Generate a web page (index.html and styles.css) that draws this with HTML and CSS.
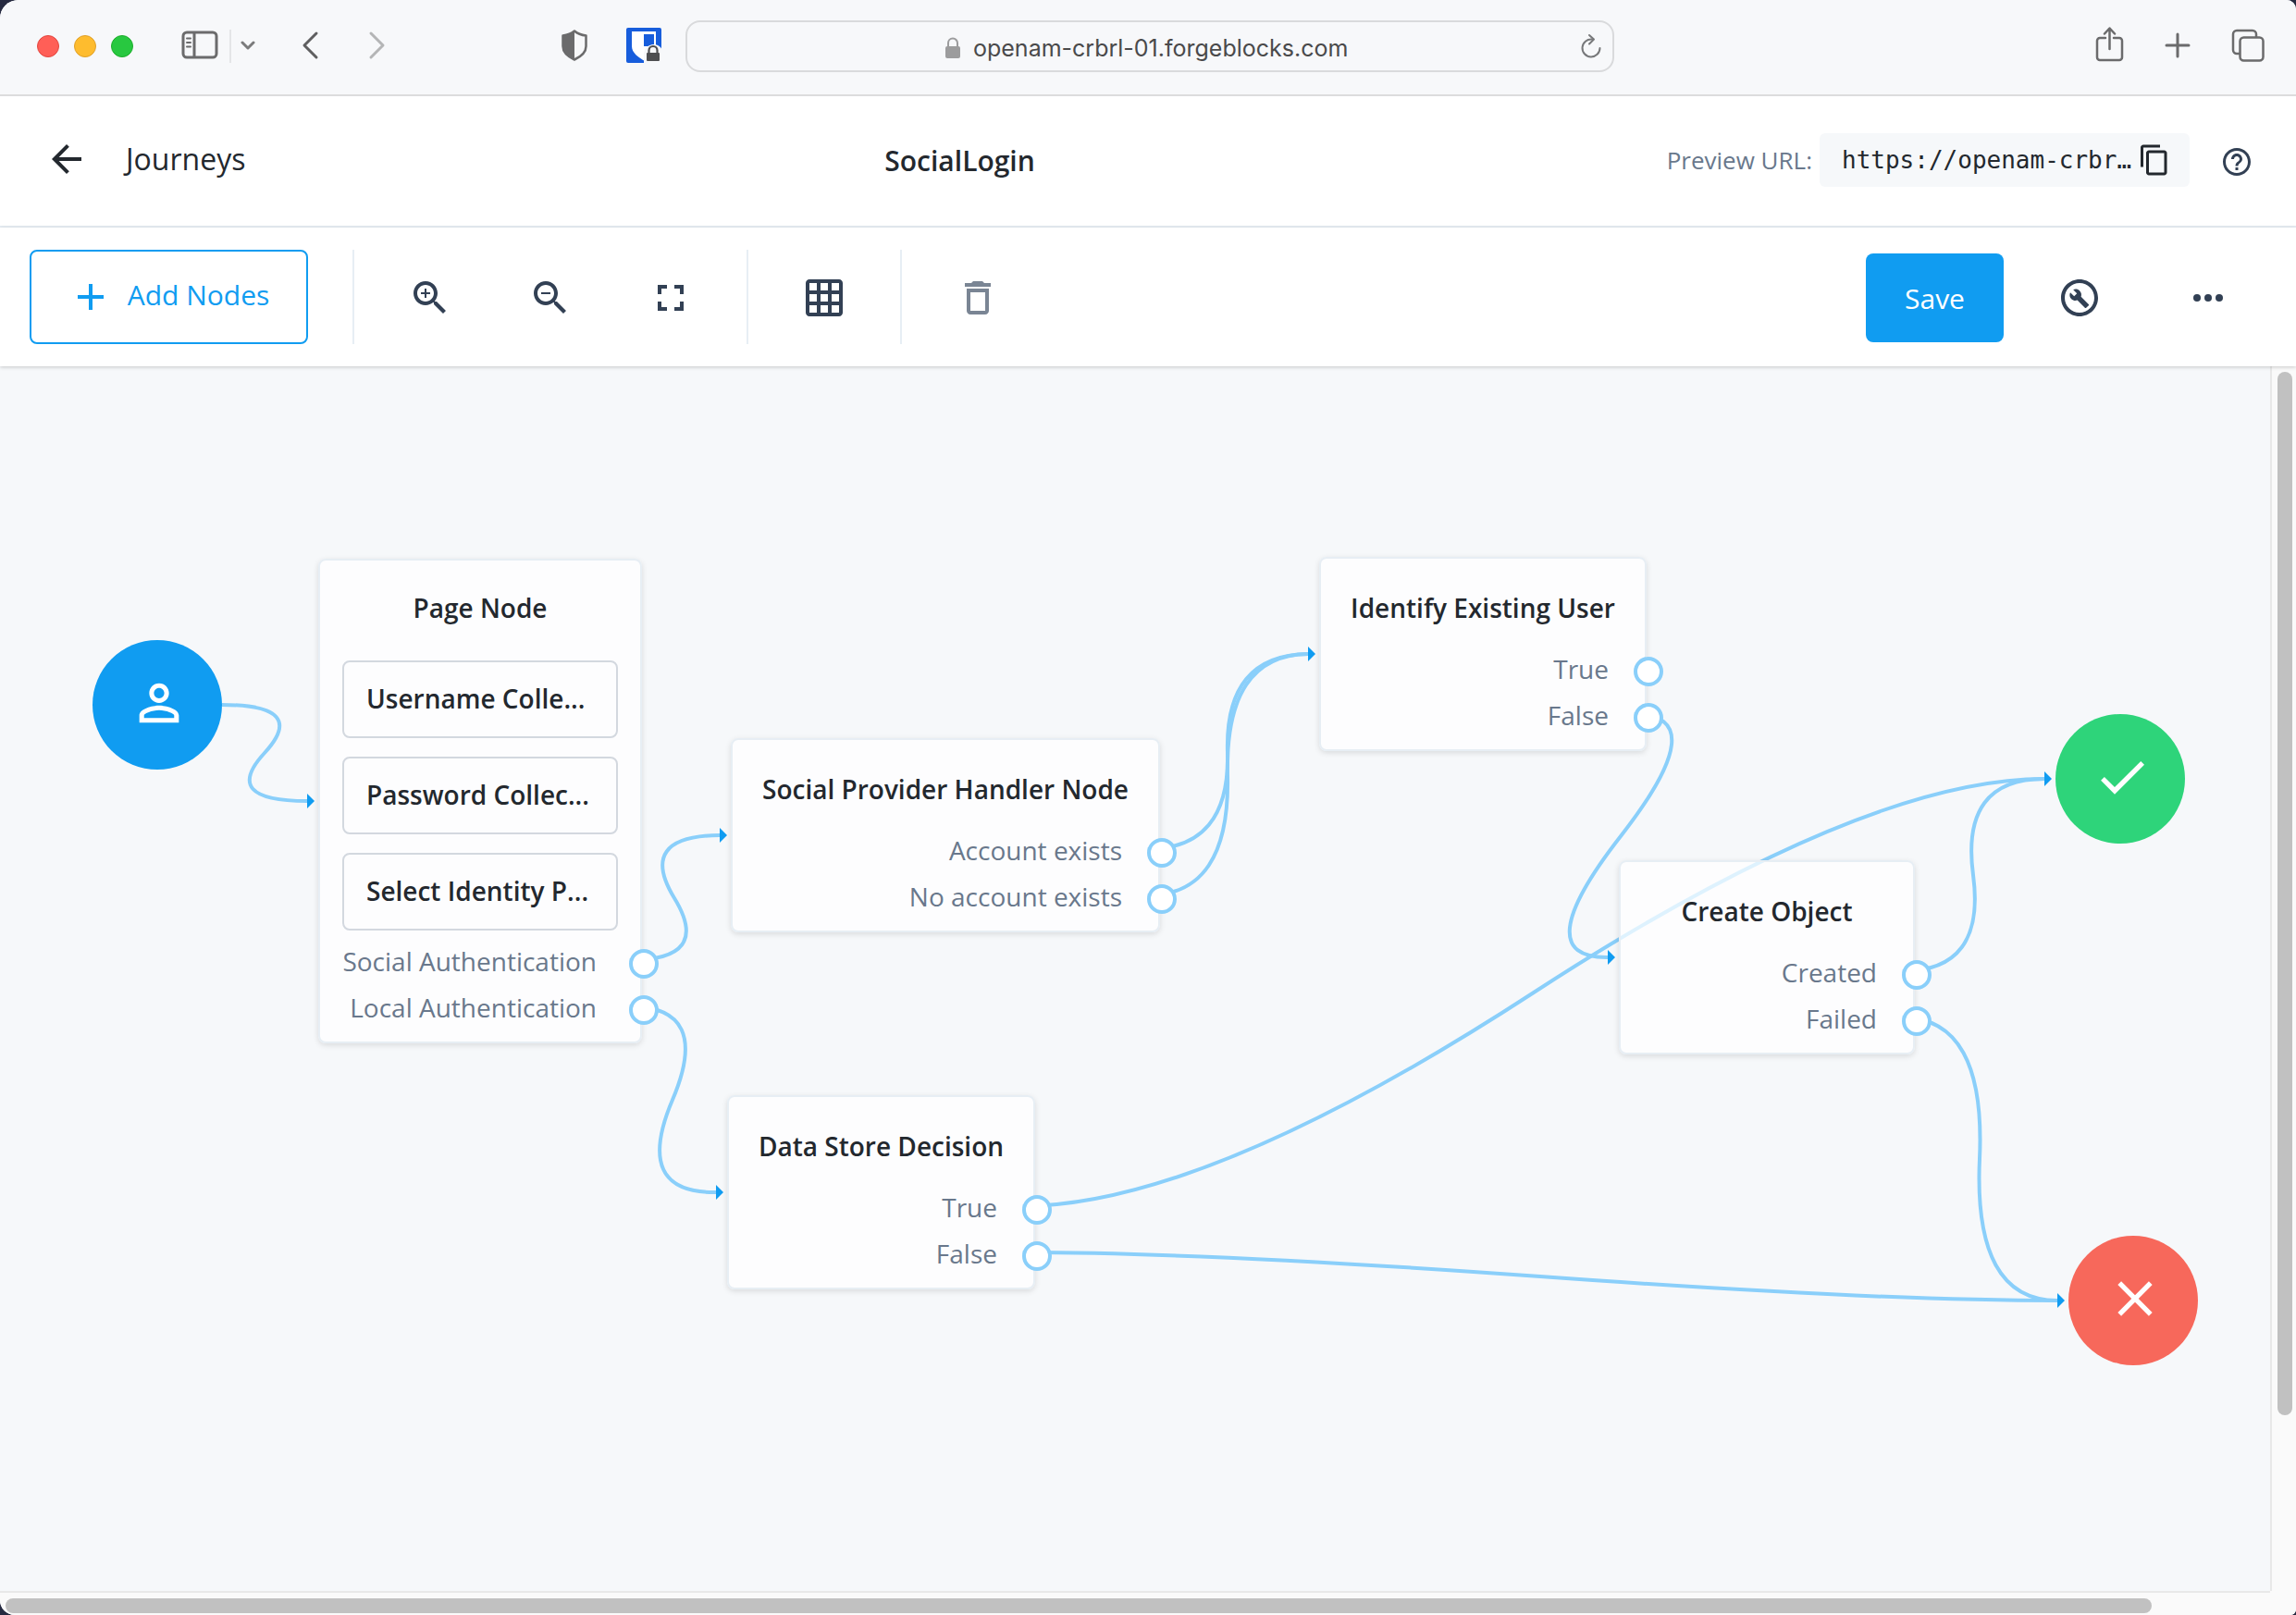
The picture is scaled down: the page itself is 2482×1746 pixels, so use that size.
FILE: index.html
```html
<!DOCTYPE html>
<html lang="en">
<head>
<meta charset="utf-8">
<title>SocialLogin - Journeys</title>
<link rel="stylesheet" href="styles.css">
</head>
<body>
<div class="window">
  <div class="chrome">
    <div class="chrome-left">
      <div class="lights"><i class="light red"></i><i class="light amber"></i><i class="light green"></i></div>
      <button class="chrome-btn sidebar-btn" aria-label="Sidebar"><svg width="40" height="32" viewBox="0 0 40 32" fill="none" stroke="#6b6b6c" stroke-width="3"><rect x="2" y="2" width="36" height="27" rx="4"/><path d="M14 2v27"/><path d="M6 8.500h4M6 13h4M6 17.500h4" stroke-width="2" stroke-linecap="round"/></svg></button>
      <span class="chrome-sep"></span>
      <button class="chrome-btn" aria-label="Tab groups"><svg width="16" height="12" viewBox="0 0 16 12" fill="none" stroke="#7b7b7c" stroke-width="3" stroke-linecap="round" stroke-linejoin="round"><path d="M2 3l6 6 6-6"/></svg></button>
      <button class="chrome-btn back-btn" aria-label="Back"><svg width="20" height="32" viewBox="0 0 20 32" fill="none" stroke="#5f5f60" stroke-width="3" stroke-linecap="round" stroke-linejoin="round"><path d="M17 3L4 16l13 13"/></svg></button>
      <button class="chrome-btn forward-btn" aria-label="Forward"><svg width="20" height="32" viewBox="0 0 20 32" fill="none" stroke="#b4b5b6" stroke-width="3" stroke-linecap="round" stroke-linejoin="round"><path d="M4 3l13 13L4 29"/></svg></button>
      <button class="chrome-btn shield-btn" aria-label="Privacy report"><svg width="28" height="34" viewBox="0 0 28 34"><path d="M14 1.500C10 5 6 6 1.500 6.500V18c0 7 5 11 12.500 14.500C21.500 29 26.500 25 26.500 18V6.500C22 6 18 5 14 1.500z" fill="none" stroke="#6b6b6c" stroke-width="2.500" stroke-linejoin="round"/><path d="M14 1.500C10 5 6 6 1.500 6.500V18c0 7 5 11 12.500 14.500z" fill="#6b6b6c"/></svg></button>
      <button class="chrome-btn vault-btn" aria-label="Password manager"><svg width="40" height="40" viewBox="0 0 40 40"><rect x="1" y="1" width="38" height="38" rx="2" fill="#175ddc"/><path d="M7 5h26v16c0 8-6 12-12 16C14 33 7 28 7 21z" fill="#fff"/><path d="M20 8h11v13H20z" fill="#175ddc"/><path d="M20 40V29a10.500 10.500 0 0 1 20-4v15z" fill="#f7f8fa"/><rect x="23" y="28" width="14" height="9" rx="1" fill="#4e4e50"/><path d="M25.500 28v-2.500a4.500 4.500 0 0 1 9 0V28" fill="none" stroke="#4e4e50" stroke-width="2.200"/></svg></button>
    </div>
    <label class="address"><svg width="16" height="24" viewBox="0 0 16 24"><rect x="0" y="10" width="16" height="13" rx="2" fill="#9c9c9d"/><path d="M3 10V6.500a5 5 0 0 1 10 0V10" fill="none" stroke="#9c9c9d" stroke-width="2"/></svg>
      <input class="address-input" type="text" value="openam-crbrl-01.forgeblocks.com" aria-label="Address">
      <button class="reload-btn" aria-label="Reload"><svg width="24" height="28" viewBox="0 0 24 28" fill="none" stroke="#77787a" stroke-width="2" stroke-linecap="round" stroke-linejoin="round"><path d="M13 6.500A9.500 9.500 0 1 0 21.500 16"/><path d="M10 2l5 4.500-5 5"/></svg></button>
    </label>
    <div class="chrome-right">
      <button class="chrome-btn" aria-label="Share"><svg width="32" height="40" viewBox="0 2 32 40" fill="none" stroke="#6b6b6c" stroke-width="2.500" stroke-linecap="round" stroke-linejoin="round"><path d="M12 14H6a3 3 0 0 0-3 3v18a3 3 0 0 0 3 3h21a3 3 0 0 0 3-3V17a3 3 0 0 0-3-3h-6M16.500 26V4M11 9.500L16.500 3.500l5.500 6"/></svg></button>
      <button class="chrome-btn" aria-label="New tab"><svg width="28" height="28" viewBox="0 0 28 28" fill="none" stroke="#6b6b6c" stroke-width="3" stroke-linecap="round"><path d="M14 2v24M2 14h24"/></svg></button>
      <button class="chrome-btn" aria-label="Show tabs"><svg width="36" height="36" viewBox="0 0 36 36" fill="none" stroke="#6b6b6c" stroke-width="2.500"><path d="M9 27H6a4 4 0 0 1-4-4V6a4 4 0 0 1 4-4h17a4 4 0 0 1 4 4v3"/><rect x="9.500" y="9.500" width="25" height="25" rx="4"/></svg></button>
    </div>
  </div>

  <header class="header">
    <a class="back" href="#"><svg width="48" height="48" viewBox="0 0 24 24" fill="#23282e"><path d="M20 11H7.830l5.590-5.590L12 4l-8 8 8 8 1.410-1.410L7.830 13H20v-2z"/></svg><span>Journeys</span></a>
    <h1 class="title">SocialLogin</h1>
    <div class="preview">
      <label class="preview-label" for="preview-url">Preview URL:</label>
      <div class="preview-box"><input id="preview-url" class="preview-url" type="text" readonly value="https://openam-crbr…"><button class="icon-btn" aria-label="Copy URL"><svg width="36" height="36" viewBox="0 0 24 24" fill="#23282e"><path d="M16 1H4c-1.100 0-2 .9-2 2v14h2V3h12V1zm3 4H8c-1.100 0-2 .9-2 2v14c0 1.100.9 2 2 2h11c1.100 0 2-.9 2-2V7c0-1.100-.9-2-2-2zm0 16H8V7h11v14z"/></svg></button></div>
      <button class="icon-btn help-btn" aria-label="Help"><svg width="36" height="36" viewBox="0 0 24 24" fill="#324054"><path d="M11 18h2v-2h-2v2zm1-16C6.480 2 2 6.480 2 12s4.480 10 10 10 10-4.480 10-10S17.520 2 12 2zm0 18c-4.410 0-8-3.590-8-8s3.590-8 8-8 8 3.590 8 8-3.590 8-8 8zm0-14c-2.210 0-4 1.790-4 4h2c0-1.100.9-2 2-2s2 .9 2 2c0 2-3 1.750-3 5h2c0-2.250 3-2.500 3-5 0-2.210-1.790-4-4-4z"/></svg></button>
    </div>
  </header>

  <div class="toolbar">
    <button class="add-nodes"><svg width="48" height="48" viewBox="0 0 24 24" fill="#109cf1"><path d="M19 13h-6v6h-2v-6H5v-2h6V5h2v6h6v2z"/></svg><span class="add-label">Add Nodes</span></button>
    <div class="tool-group tools-zoom">
      <button class="icon-btn" aria-label="Zoom in"><svg width="48" height="48" viewBox="0 0 24 24" fill="#324054"><path d="M15.500 14h-.79l-.28-.27C15.410 12.590 16 11.110 16 9.500 16 5.910 13.090 3 9.500 3S3 5.910 3 9.500 5.910 16 9.500 16c1.610 0 3.090-.59 4.230-1.570l.27.28v.79l5 4.990L20.490 19l-4.990-5zm-6 0C7.010 14 5 11.990 5 9.500S7.010 5 9.500 5 14 7.010 14 9.500 11.990 14 9.500 14zm.5-7H9v2H7v1h2v2h1v-2h2V9h-2z"/></svg></button>
      <button class="icon-btn" aria-label="Zoom out"><svg width="48" height="48" viewBox="0 0 24 24" fill="#324054"><path d="M15.500 14h-.79l-.28-.27C15.410 12.590 16 11.110 16 9.500 16 5.910 13.090 3 9.500 3S3 5.910 3 9.500 5.910 16 9.500 16c1.610 0 3.090-.59 4.230-1.570l.27.28v.79l5 4.990L20.490 19l-4.990-5zm-6 0C7.010 14 5 11.990 5 9.500S7.010 5 9.500 5 14 7.010 14 9.500 11.990 14 9.500 14zM7 9h5v1H7z"/></svg></button>
      <button class="icon-btn" aria-label="Fit to screen"><svg width="48" height="48" viewBox="0 0 24 24" fill="#324054"><path d="M7 14H5v5h5v-2H7v-3zm-2-4h2V7h3V5H5v5zm12 7h-3v2h5v-5h-2v3zM14 5v2h3v3h2V5h-5z"/></svg></button>
    </div>
    <div class="tool-group">
      <button class="icon-btn" aria-label="Toggle grid"><svg width="48" height="48" viewBox="0 0 24 24" fill="#324054"><path fill-rule="evenodd" d="M20 2H4c-1.100 0-2 .9-2 2v16c0 1.100.9 2 2 2h16c1.100 0 2-.9 2-2V4c0-1.100-.9-2-2-2zM8 20H4v-4h4v4zm0-6H4v-4h4v4zm0-6H4V4h4v4zm6 12h-4v-4h4v4zm0-6h-4v-4h4v4zm0-6h-4V4h4v4zm6 12h-4v-4h4v4zm0-6h-4v-4h4v4zm0-6h-4V4h4v4z"/></svg></button>
    </div>
    <div class="tool-group">
      <button class="icon-btn" aria-label="Delete"><svg width="48" height="48" viewBox="0 0 24 24" fill="#7a8594"><path d="M16 9v10H8V9h8m-1.500-6h-5l-1 1H5v2h14V4h-3.500l-1-1zM18 7H6v12c0 1.100.9 2 2 2h8c1.100 0 2-.9 2-2V7z"/></svg></button>
    </div>
    <div class="actions">
      <button class="save">Save</button>
      <button class="icon-btn" aria-label="Debug"><svg width="48" height="48" viewBox="0 0 24 24" fill="#324054"><path d="M12 2C6.480 2 2 6.480 2 12s4.480 10 10 10 10-4.480 10-10S17.520 2 12 2zm0 18c-4.410 0-8-3.590-8-8s3.590-8 8-8 8 3.590 8 8-3.590 8-8 8z"/><path d="M16.900 15.500l-4.100-4.100c.4-1.100.2-2.300-.7-3.200-1-1-2.400-1.200-3.500-.6l2 2-1.500 1.500-2.100-2c-.6 1.100-.4 2.600.6 3.500.9.9 2.100 1.100 3.200.7l4.100 4.100c.2.200.5.200.7 0l1.200-1.100c.3-.2.300-.6.100-.8z"/></svg></button>
      <button class="icon-btn" aria-label="More"><svg width="48" height="48" viewBox="0 0 24 24" fill="#324054"><circle cx="6" cy="12" r="2"/><circle cx="12" cy="12" r="2"/><circle cx="18" cy="12" r="2"/></svg></button>
    </div>
  </div>

  <main class="workspace">
    <div class="canvas">
      <svg class="edges" fill="none" stroke="#8acffa" stroke-width="4">
        <path d="M240 366Q334 366 286 418T332 470"/>
        <path d="M680 642Q770 642 729 575T778 507"/>
        <path d="M680 692Q770 692 727 793T774 893"/>
        <path d="M1240 522Q1330 522 1327 417T1414 311"/>
        <path d="M1240 572Q1330 572 1327 442T1414 311"/>
        <path d="M1766 376Q1855 376 1752 508T1738 639"/>
        <path d="M1105 908Q1303 908 1658 677T2210 446"/>
        <path d="M1105 958Q1305 958 1665 984T2224 1010"/>
        <path d="M2056 654Q2147 654 2133 550T2210 446"/>
        <path d="M2056 704Q2147 704 2140 857T2224 1010"/>
        <g fill="#109cf1" stroke="none">
          <path d="M332 462l8 8-8 8z"/><path d="M778 499l8 8-8 8z"/><path d="M774 885l8 8-8 8z"/>
          <path d="M1414 303l8 8-8 8z"/><path d="M1738 631l8 8-8 8z"/><path d="M2210 438l8 8-8 8z"/><path d="M2224 1002l8 8-8 8z"/>
        </g>
      </svg>

      <div class="terminal start"><svg width="64" height="64" viewBox="0 0 24 24" fill="#fff"><path d="M12 5.900c1.160 0 2.100.94 2.100 2.100s-.94 2.100-2.100 2.100S9.900 9.160 9.900 8s.94-2.100 2.100-2.100m0 9c2.970 0 6.100 1.460 6.100 2.100v1.100H5.900V17c0-.64 3.130-2.100 6.100-2.100M12 4C9.790 4 8 5.790 8 8s1.790 4 4 4 4-1.790 4-4-1.790-4-4-4zm0 9c-2.670 0-8 1.340-8 4v3h16v-3c0-2.660-5.330-4-8-4z"/></svg></div>

      <section class="node page-node">
        <h2 class="node-title">Page Node</h2>
        <div class="stack">
          <div class="stack-item">Username Colle...</div>
          <div class="stack-item">Password Collec...</div>
          <div class="stack-item">Select Identity P...</div>
        </div>
        <ul class="outcomes"><li>Social Authentication<i class="pin"></i></li><li>Local Authentication<i class="pin"></i></li></ul>
      </section>
      <section class="node social-node">
        <h2 class="node-title">Social Provider Handler Node</h2>
        <ul class="outcomes"><li>Account exists<i class="pin"></i></li><li>No account exists<i class="pin"></i></li></ul>
      </section>
      <section class="node data-node">
        <h2 class="node-title">Data Store Decision</h2>
        <ul class="outcomes"><li>True<i class="pin"></i></li><li>False<i class="pin"></i></li></ul>
      </section>
      <section class="node identify-node">
        <h2 class="node-title">Identify Existing User</h2>
        <ul class="outcomes"><li>True<i class="pin"></i></li><li>False<i class="pin"></i></li></ul>
      </section>
      <section class="node create-node">
        <h2 class="node-title">Create Object</h2>
        <ul class="outcomes"><li>Created<i class="pin"></i></li><li>Failed<i class="pin"></i></li></ul>
      </section>

      <div class="terminal success"><svg width="64" height="64" viewBox="0 0 24 24" fill="#fff"><path d="M9 16.170L4.830 12l-1.420 1.410L9 19 21 7l-1.410-1.410z"/></svg></div>
      <div class="terminal failure"><svg width="64" height="64" viewBox="0 0 24 24" fill="#fff"><path d="M19 6.410L17.590 5 12 10.590 6.410 5 5 6.410 10.590 12 5 17.590 6.410 19 12 13.410 17.590 19 19 17.590 13.410 12z"/></svg></div>
    </div>
    <div class="track-v"><div class="thumb-v"></div></div>
    <div class="track-h"><div class="thumb-h"></div></div>
    <div class="corner"></div>
  </main>
</div>
</body>
</html>
```
FILE: styles.css
```css
* { box-sizing: border-box; }
body { margin: 0; background: #262a40; font-family: "Open Sans", sans-serif; color: #23282e; }
button { border: 0; padding: 0; background: none; font: inherit; color: inherit; }
input { border: 0; padding: 0; background: none; color: inherit; min-width: 0; }
svg { display: block; }
h1, h2, ul { margin: 0; padding: 0; list-style: none; }

.window { display: flex; flex-direction: column; min-height: 100vh; overflow: hidden; background: #fff; border-radius: 20px 10px 6px 16px; }

/* browser chrome */
.chrome { display: flex; height: 104px; padding-bottom: 2px; align-items: center; background: #f7f8fa; border-bottom: 2px solid #dcdcdd; }
.chrome-btn { margin-bottom: 2px; }
.chrome-left { display: flex; align-items: center; flex: 0 0 741px; padding-left: 40px; }
.lights { display: flex; gap: 16px; margin-right: 52px; }
.light { width: 24px; height: 24px; border-radius: 50%; }
.red { background: #ff5f57; border: 1px solid #e2463f; }
.amber { background: #febc2e; border: 1px solid #e0a028; }
.green { background: #28c840; border: 1px solid #1dad2b; }
.chrome-sep { width: 2px; height: 36px; margin: 0 10px 0 12px; background: #e4e5e7; }
.back-btn { margin-left: 49px; }
.forward-btn { margin-left: 52px; }
.shield-btn { margin-left: 190px; }
.vault-btn { margin-left: 41px; }
.address { position: relative; display: flex; flex: 1; height: 56px; padding-top: 4px; align-items: center; justify-content: center; gap: 14px; border: 2px solid #d9dadc; border-radius: 16px; color: #4a4a4b; }
.address-input { width: 412px; font: 25px/40px Inter, sans-serif; }
.reload-btn { position: absolute; right: 11px; top: 12px; }
.chrome-right { display: flex; flex: 0 0 737px; align-items: center; justify-content: flex-end; gap: 44px; padding-right: 34px; }

/* journey header */
.header { display: flex; height: 142px; align-items: center; justify-content: space-between; padding: 0 46px 2px 48px; border-bottom: 2px solid #e7eef4; }
.back { display: flex; align-items: center; gap: 40px; padding: 0 8px 2px 0; color: inherit; text-decoration: none; font-size: 32px; line-height: 44px; }
.title { padding-top: 2px; font-size: 30px; line-height: 40px; font-weight: 600; }
.preview { display: flex; align-items: center; font-size: 26px; }
.preview-label { color: #69788c; margin-right: 8px; }
.preview-box { display: flex; width: 400px; height: 58px; align-items: center; padding: 0 20px 0 24px; background: #f6f8fa; border-radius: 6px; }
.preview-url { flex: 1; font: 26px/40px "DejaVu Sans Mono", monospace; }
.help-btn { margin: 4px 0 0 33px; }

/* toolbar */
.toolbar { position: relative; z-index: 1; display: flex; height: 150px; align-items: center; padding: 0 71px 0 32px; background: #fff; box-shadow: 0 1px 4px rgba(0, 0, 0, .2); }
.add-nodes { display: flex; width: 301px; height: 102px; align-items: center; justify-content: center; gap: 16px; border: 2px solid #109cf1; border-radius: 8px; color: #109cf1; font-size: 30px; }
.add-label { padding-bottom: 6px; }
.tool-group { display: flex; height: 102px; align-items: center; gap: 82px; padding: 2px 58px 0; border-left: 2px solid #e7eef4; }
.tools-zoom { margin-left: 48px; }
.actions { display: flex; flex: 1; align-items: center; justify-content: flex-end; padding-top: 2px; }
.actions .icon-btn { margin-left: 58px; }
.actions .icon-btn + .icon-btn { margin-left: 91px; }
.save { width: 149px; height: 96px; background: #109cf1; border-radius: 8px; color: #fff; font-size: 30px; }

/* canvas and scrollbars */
.workspace { display: grid; flex: 1; grid-template: 1fr 26px / 1fr 28px; background: #fafafa; }
.canvas { position: relative; min-height: 1100px; overflow: hidden; background: #f6f8fa; }
.edges { position: absolute; inset: 0; width: 100%; height: 100%; }
.track-v { border-left: 2px solid #e8e8e8; padding: 6px; }
.thumb-v { width: 16px; height: 86%; border-radius: 8px; background: #c1c1c1; }
.track-h { border-top: 2px solid #e8e8e8; padding: 6px; }
.thumb-h { width: 95%; height: 16px; border-radius: 8px; background: #c1c1c1; }

/* nodes */
.node { position: absolute; padding: 33px 0 12px; background: rgba(255, 255, 255, .72); border: 2px solid #e7eef4; border-radius: 8px; box-shadow: 0 2px 6px rgba(0, 0, 0, .12); font-size: 28px; line-height: 40px; }
.node-title { margin-bottom: 21px; font-size: 28px; line-height: 40px; font-weight: 600; text-align: center; }
.outcomes li { position: relative; height: 50px; padding-right: 39px; line-height: 50px; text-align: right; color: #69788c; }
.pin { position: absolute; right: -20px; top: 12px; width: 32px; height: 32px; border: 4px solid #8acffa; border-radius: 50%; background: #fff; }
.page-node { left: 344px; top: 208px; width: 350px; padding-top: 31px; }
.page-node .node-title { margin-bottom: 37px; }
.page-node .outcomes li { padding-right: 47px; }
.stack { display: grid; gap: 20px; margin: 0 24px 8px; }
.stack-item { height: 84px; padding: 0 24px; border: 2px solid #d3d8df; border-radius: 8px; line-height: 78px; font-weight: 600; white-space: nowrap; }
.social-node { left: 790px; top: 402px; width: 464px; }
.data-node { left: 786px; top: 788px; width: 333px; }
.identify-node { left: 1426px; top: 206px; width: 354px; }
.create-node { left: 1750px; top: 534px; width: 320px; }
.terminal { position: absolute; display: flex; width: 140px; height: 140px; align-items: center; justify-content: center; padding: 0 0 4px 4px; border-radius: 50%; }
.start { left: 100px; top: 296px; background: #109cf1; }
.success { left: 2222px; top: 376px; background: #2ed47a; }
.failure { left: 2236px; top: 940px; background: #f7685b; }
```
